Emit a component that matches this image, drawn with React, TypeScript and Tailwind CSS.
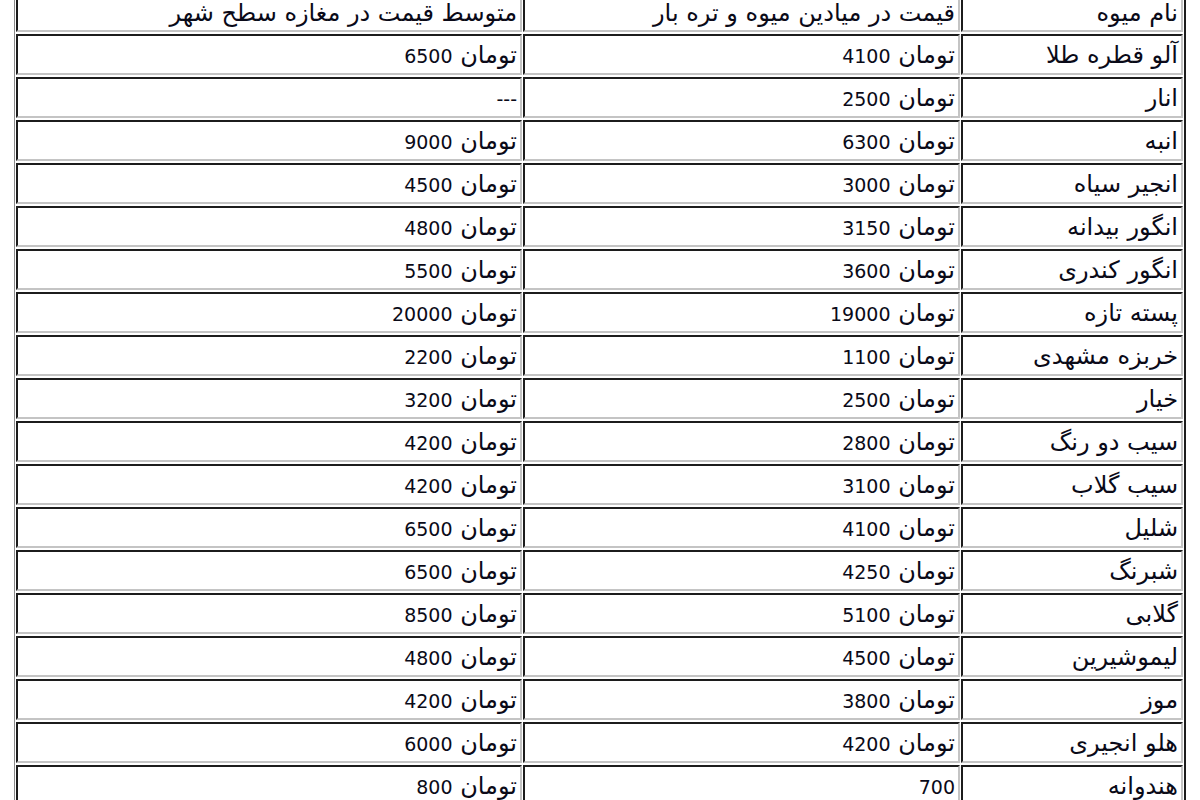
import type { ReactElement } from 'react';

type FruitRow = { name: string; market: string; shop: string };

const rows: FruitRow[] = [
  { name: 'آلو قطره طلا', market: '4100', shop: '6500' },
  { name: 'انار', market: '2500', shop: '---' },
  { name: 'انبه', market: '6300', shop: '9000' },
  { name: 'انجیر سیاه', market: '3000', shop: '4500' },
  { name: 'انگور بیدانه', market: '3150', shop: '4800' },
  { name: 'انگور کندری', market: '3600', shop: '5500' },
  { name: 'پسته تازه', market: '19000', shop: '20000' },
  { name: 'خربزه مشهدی', market: '1100', shop: '2200' },
  { name: 'خیار', market: '2500', shop: '3200' },
  { name: 'سیب دو رنگ', market: '2800', shop: '4200' },
  { name: 'سیب گلاب', market: '3100', shop: '4200' },
  { name: 'شلیل', market: '4100', shop: '6500' },
  { name: 'شبرنگ', market: '4250', shop: '6500' },
  { name: 'گلابی', market: '5100', shop: '8500' },
  { name: 'لیموشیرین', market: '4500', shop: '4800' },
  { name: 'موز', market: '3800', shop: '4200' },
  { name: 'هلو انجیری', market: '4200', shop: '6000' },
  { name: 'هندوانه', market: '700', shop: '800' },
];

// the 700 for watermelon has no unit in the source table
const noUnit = new Set(['هندوانه:market']);

// old-school border=1 cell: dark top/left, light bottom/right
const cellBase =
  'h-[41px] p-0 pr-[3px] text-right border-t-2 border-l-2 border-b-2 border-r-2 border-t-[#1c1c1c] border-l-[#1c1c1c] border-b-[#c4c4c4] border-r-[#c4c4c4] whitespace-nowrap';
const cell = `${cellBase} align-middle`;
const headCell = `${cellBase} align-bottom pb-[5px]`;

function Price({ value, unit = true }: { value: string; unit?: boolean }): ReactElement {
  if (value === '---') return <span className="text-[19px]">---</span>;
  return (
    <>
      <span className="text-[19px]">{value}</span>
      {unit ? <> تومان</> : null}
    </>
  );
}

export default function App(): ReactElement {
  return (
    <div className="h-[800px] w-[1200px] overflow-hidden bg-white">
      <table
        dir="ltr"
        className="-mt-[12px] ml-[14px] w-[1172px] table-fixed border-separate border-spacing-x-[1px] border-spacing-y-[2px] border-t border-l border-r-2 border-b-2 border-t-[#a8a8a8] border-l-[#8a8a8a] border-r-[#1c1c1c] border-b-[#1c1c1c] text-[24px] leading-none text-[#0a0a18] [font-family:'DejaVu_Sans',sans-serif]"
      >
        <colgroup>
          <col className="w-[506px]" />
          <col className="w-[437px]" />
          <col className="w-[222px]" />
        </colgroup>
        <thead>
          <tr>
            <td className={headCell}>متوسط قیمت در مغازه سطح شهر</td>
            <td className={headCell}>قیمت در میادین میوه و تره بار</td>
            <td className={headCell}>نام میوه</td>
          </tr>
        </thead>
        <tbody>
          {rows.map((row) => (
            <tr key={row.name}>
              <td className={cell}>
                <Price value={row.shop} />
              </td>
              <td className={cell}>
                <Price value={row.market} unit={!noUnit.has(`${row.name}:market`)} />
              </td>
              <td className={cell}>{row.name}</td>
            </tr>
          ))}
        </tbody>
      </table>
    </div>
  );
}
